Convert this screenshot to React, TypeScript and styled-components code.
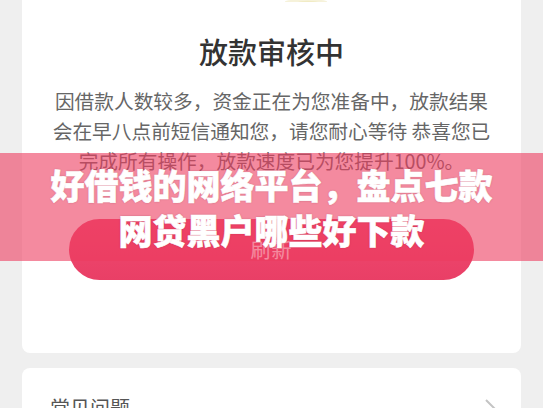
import React from "react";
import styled, { createGlobalStyle } from "styled-components";

const Global = createGlobalStyle`
  html, body { margin: 0; padding: 0; background: #efefef; }
  body { font-family: "Noto Sans CJK SC", "Noto Sans", sans-serif; overflow: hidden; }
`;

const Page = styled.div`
  position: relative;
  width: 543px;
  height: 408px;
  overflow: hidden;
  background: #efefef;
`;

const Content = styled.div`
  display: flex;
  flex-direction: column;
  gap: 15px;
  padding: 0 22px;
  margin-top: -58px;
`;

const Card = styled.section<{ $pt: number; $pb: number }>`
  background: #ffffff;
  border-radius: 8px;
  padding: ${(p) => p.$pt}px 28px ${(p) => p.$pb}px;
  display: flex;
  flex-direction: column;
  align-items: center;
`;

const IconWrap = styled.div`
  width: 120px;
  height: 60px;
  display: flex;
  justify-content: center;
`;

const Title = styled.h1`
  margin: 29px 0 0;
  font-size: 29px;
  line-height: 40px;
  font-weight: 500;
  color: #333333;
  text-align: center;
`;

const Desc = styled.p`
  margin: 15px 0 0;
  font-size: 19.7px;
  line-height: 30px;
  color: #666666;
  text-align: center;
  white-space: pre-line;
`;

const RefreshButton = styled.button`
  margin-top: 43px;
  width: 405px;
  height: 61px;
  border: none;
  border-radius: 31px;
  background: linear-gradient(180deg, #f04a70 0%, #e93f66 100%);
  color: #ffffff;
  font-family: inherit;
  font-size: 20px;
  letter-spacing: 1px;
`;

const Row = styled.div`
  align-self: stretch;
  display: flex;
  align-items: center;
  justify-content: space-between;
`;

const RowLabel = styled.span`
  font-size: 20px;
  line-height: 28px;
  color: #555555;
`;

const Chevron = styled.svg`
  margin-right: -3px;
`;

const Banner = styled.div`
  position: absolute;
  left: 0;
  right: 0;
  top: 153px;
  height: 108px;
  background: rgba(237, 60, 95, 0.6);
  display: flex;
  align-items: center;
  justify-content: center;
`;

const BannerText = styled.h2`
  margin: 0;
  font-size: 34px;
  line-height: 45px;
  font-weight: 900;
  color: #ffffff;
  text-align: center;
  -webkit-text-stroke: 0.6px #ffffff;
  text-shadow: 0 0 2px rgba(90, 20, 40, 0.35);
`;

export default function App() {
  return (
    <Page>
      <Global />
      <Content>
        <Card $pt={0} $pb={73}>
          <IconWrap>
            <svg width="120" height="60" viewBox="0 0 120 60">
              <ellipse cx="94" cy="59.5" rx="21" ry="2" fill="#f6f2da" />
              <ellipse cx="96" cy="60" rx="10" ry="1.2" fill="#f1ebc4" />
            </svg>
          </IconWrap>
          <Title>放款审核中</Title>
          <Desc>
            {"因借款人数较多，资金正在为您准备中，放款结果\n会在早八点前短信通知您，请您耐心等待 恭喜您已\n完成所有操作，放款速度已为您提升100%。"}
          </Desc>
          <RefreshButton>刷新</RefreshButton>
        </Card>
        <Card $pt={26} $pb={26}>
          <Row>
            <RowLabel>常见问题</RowLabel>
            <Chevron width="12" height="20" viewBox="0 0 12 20">
              <path d="M2 2 L10 10 L2 18" fill="none" stroke="#c4c4c4" strokeWidth="2" />
            </Chevron>
          </Row>
        </Card>
      </Content>
      <Banner>
        <BannerText>
          好借钱的网络平台，盘点七款
          <br />
          网贷黑户哪些好下款
        </BannerText>
      </Banner>
    </Page>
  );
}
